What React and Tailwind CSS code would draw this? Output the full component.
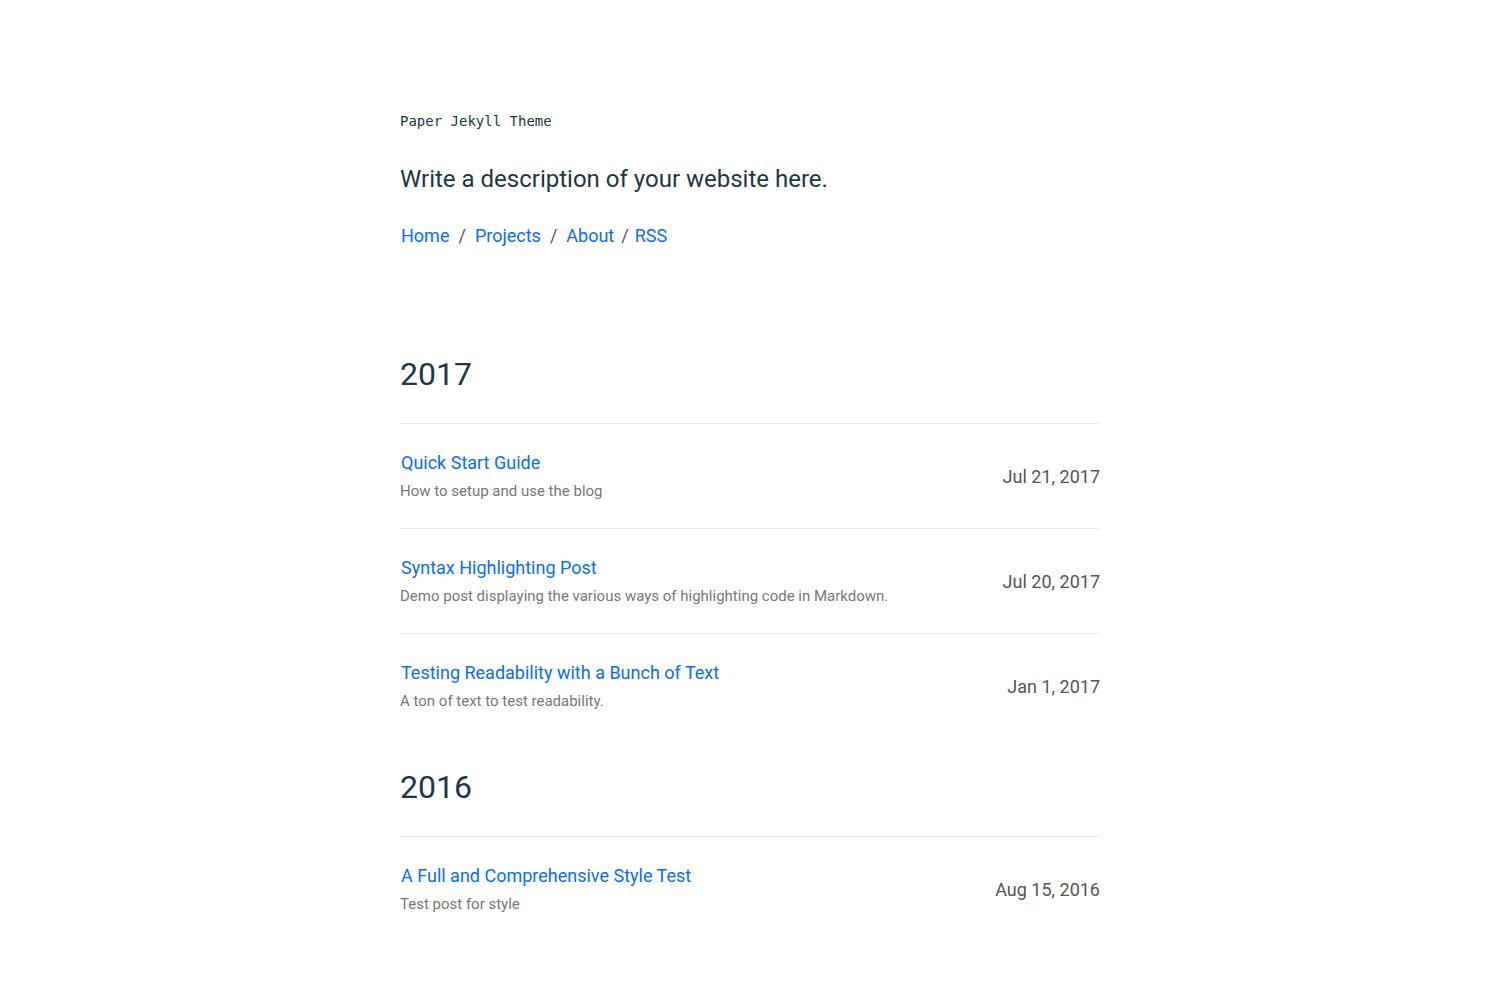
import React from 'react'

const sans = { fontFamily: 'Roboto, "Noto Sans", sans-serif' }

const years = [
  {
    year: '2017',
    posts: [
      { title: 'Quick Start Guide', desc: 'How to setup and use the blog', date: 'Jul 21, 2017' },
      {
        title: 'Syntax Highlighting Post',
        desc: 'Demo post displaying the various ways of highlighting code in Markdown.',
        date: 'Jul 20, 2017',
      },
      { title: 'Testing Readability with a Bunch of Text', desc: 'A ton of text to test readability.', date: 'Jan 1, 2017' },
    ],
  },
  {
    year: '2016',
    posts: [{ title: 'A Full and Comprehensive Style Test', desc: 'Test post for style', date: 'Aug 15, 2016' }],
  },
]

const PostRow = ({ post, last }) => (
  <li className={`flex items-center justify-between pt-[25px] pb-[27px] ${last ? '' : 'border-b border-[#ebebeb]'}`}>
    <div>
      <a href="#" className="block pl-px text-[18px] leading-7 text-[#0a6cf5]">
        {post.title}
      </a>
      <p className="mt-1 text-[15px] leading-5 text-[#777]">{post.desc}</p>
    </div>
    <span className="mt-1 text-[18px] leading-7 text-[#555]">{post.date}</span>
  </li>
)

const App = () => {
  return (
    <div className="min-h-screen bg-white" style={sans}>
      <div className="mx-auto w-[700px] pt-[111px]">
        <header>
          <div className="text-[14px] leading-5 text-[#1c3745]" style={{ fontFamily: '"DejaVu Sans Mono", monospace' }}>
            Paper Jekyll Theme
          </div>
          <p className="mt-8 text-[24px] leading-8 text-[#1c3745]">Write a description of your website here.</p>
          <nav className="mt-[27px] flex items-center text-[18px] leading-7">
            <a href="#" className="pl-px text-[#0a6cf5]">Home</a>
            <span className="mx-[9px] text-[#555]">/</span>
            <a href="#" className="text-[#0a6cf5]">Projects</a>
            <span className="mx-[9px] text-[#555]">/</span>
            <a href="#" className="text-[#0a6cf5]">About</a>
            <span className="ml-[7px] mr-[6px] text-[#555]">/</span>
            <a href="#" className="text-[#0a6cf5]">RSS</a>
          </nav>
        </header>

        <main className="mt-[104px]">
          {years.map((y, i) => (
            <section key={y.year} className={i > 0 ? 'mt-[29px]' : ''}>
              <h2 className="pb-[29px] text-[32px] leading-10 text-[#1c3745]">{y.year}</h2>
              <ul className="border-t border-[#ebebeb]">
                {y.posts.map((p, j) => (
                  <PostRow key={p.title} post={p} last={j === y.posts.length - 1} />
                ))}
              </ul>
            </section>
          ))}
        </main>
      </div>
    </div>
  )
}

export default App
